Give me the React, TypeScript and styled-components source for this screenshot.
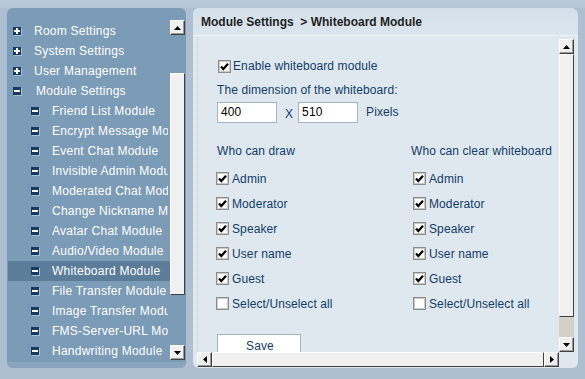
import React from "react";
import styled, { createGlobalStyle, css } from "styled-components";

const GlobalStyle = createGlobalStyle`
  html, body { margin: 0; padding: 0; }
  body {
    width: 585px;
    height: 379px;
    overflow: hidden;
    background: #adbfd1;
    font-family: "Liberation Sans", Arial, sans-serif;
  }
`;

const Page = styled.div`
  width: 585px;
  height: 379px;
  box-sizing: border-box;
  padding: 8px 7px 11px 7px;
  display: flex;
  gap: 7px;
  background: linear-gradient(#b9c9da 0, #b6c7d8 8px, #adbfd1 8px);
`;

/* ---------- Left tree panel ---------- */
const SidePanel = styled.div`
  width: 179px;
  height: 360px;
  border-radius: 6px;
  background: #7b9bb6;
  display: flex;
  flex-direction: column;
  overflow: hidden;
`;

const TreeArea = styled.div`
  display: flex;
  flex: none;
  padding-top: 12px;
  height: 340px;
`;

const TreeList = styled.div`
  width: 163px;
  padding-top: 1px;
  display: flex;
  flex-direction: column;
`;

const TreeRow = styled.div<{ $level: number; $selected?: boolean }>`
  height: 20px;
  flex: none;
  display: flex;
  align-items: center;
  padding-left: ${(p) => (p.$level === 0 ? 6 : 24)}px;
  background: ${(p) => (p.$selected ? "#5c7d9a" : "transparent")};
  ${(p) =>
    p.$selected &&
    css`
      margin-left: 1px;
      padding-left: ${p.$level === 0 ? 5 : 23}px;
    `}
`;

const Expander = styled.span<{ $open: boolean }>`
  position: relative;
  width: 8px;
  height: 8px;
  flex: none;
  background: #173a62;
  box-shadow: 1px 1px 0 #a8bfd4;
  &::before {
    content: "";
    position: absolute;
    left: 1px;
    right: 1px;
    top: 3px;
    height: 2px;
    background: #fff;
  }
  ${(p) =>
    !p.$open &&
    css`
      &::after {
        content: "";
        position: absolute;
        top: 1px;
        bottom: 1px;
        left: 3px;
        width: 2px;
        background: #fff;
      }
    `}
`;

const TreeLabel = styled.span<{ $gap: number }>`
  flex: 1;
  margin-left: ${(p) => p.$gap}px;
  margin-right: 2px;
  overflow: hidden;
  white-space: nowrap;
  color: #ffffff;
  font-size: 12px;
  letter-spacing: 0.25px;
`;

const SideFooter = styled.div`
  flex: 1;
  margin-top: 2px;
  background: #89a6be;
`;

/* ---------- Scrollbars ---------- */
const VScroll = styled.div<{ $top?: number }>`
  width: 15px;
  flex: none;
  display: flex;
  flex-direction: column;
  padding-top: ${(p) => p.$top ?? 0}px;
`;

const HScroll = styled.div`
  height: 15px;
  flex: none;
  display: flex;
`;

const ArrowButton = styled.div`
  width: 15px;
  height: 15px;
  flex: none;
  box-sizing: border-box;
  background: #efefef;
  border-top: 1px solid #ffffff;
  border-left: 1px solid #ffffff;
  border-right: 1px solid #404040;
  border-bottom: 1px solid #404040;
  box-shadow: inset -1px -1px 0 #9a9a9a;
  display: flex;
  align-items: center;
  justify-content: center;
`;

const Thumb = styled.div<{ $len?: number; $horizontal?: boolean }>`
  box-sizing: border-box;
  background: #f0f0f0;
  border-top: 1px solid #ffffff;
  border-left: 1px solid #ffffff;
  border-right: 1px solid #404040;
  border-bottom: 1px solid #404040;
  ${(p) =>
    p.$horizontal
      ? css`
          flex: 1;
          height: 15px;
        `
      : css`
          height: ${p.$len}px;
          flex: none;
        `}
`;

const Track = styled.div<{ $len?: number; $grey?: boolean }>`
  background: ${(p) => (p.$grey ? "#d4d0c8" : "transparent")};
  ${(p) =>
    p.$len !== undefined
      ? css`
          height: ${p.$len}px;
          flex: none;
        `
      : css`
          flex: 1;
        `}
`;

type Dir = "up" | "down" | "left" | "right";
const arrowPoints: Record<Dir, string> = {
  up: "0,4 7,4 3.5,0",
  down: "0,0 7,0 3.5,4",
  left: "4,0 4,7 0,3.5",
  right: "0,0 0,7 4,3.5",
};

function Arrow({ dir }: { dir: Dir }) {
  const horiz = dir === "left" || dir === "right";
  return (
    <ArrowButton>
      <svg width={horiz ? 4 : 7} height={horiz ? 7 : 4} viewBox={horiz ? "0 0 4 7" : "0 0 7 4"}>
        <polygon points={arrowPoints[dir]} fill="#000" />
      </svg>
    </ArrowButton>
  );
}

/* ---------- Right main panel ---------- */
const MainPanel = styled.div`
  width: 385px;
  height: 360px;
  border-radius: 6px 8px 6px 6px;
  background: #dfe7ef;
  display: flex;
  flex-direction: column;
  overflow: hidden;
`;

const Header = styled.div`
  height: 28px;
  flex: none;
  box-sizing: border-box;
  padding-left: 8px;
  display: flex;
  align-items: center;
  background: linear-gradient(#d3dfe9, #dbe5ee);
  border-bottom: 1px solid #eef3f7;
  font-size: 12px;
  font-weight: bold;
  color: #1f1f1f;
  white-space: pre;
`;

const MainBody = styled.div`
  display: flex;
  flex-direction: column;
  padding: 1px 3px 1px 4px;
`;

const ScrollRow = styled.div`
  display: flex;
  flex: none;
  height: 315px;
`;

const Viewport = styled.div`
  width: 362px;
  height: 315px;
  box-sizing: border-box;
  border-left: 1px dotted #c3d0dd;
  overflow: hidden;
  padding: 19px 0 0 19px;
  display: flex;
  flex-direction: column;
  color: #123d68;
  font-size: 12px;
  letter-spacing: 0.1px;
  & > * {
    flex-shrink: 0;
  }
`;

const CheckRow = styled.label`
  height: 20px;
  display: flex;
  align-items: center;
  gap: 2px;
  margin-left: 1px;
  white-space: nowrap;
`;

const Box = styled.span`
  width: 13px;
  height: 13px;
  flex: none;
  box-sizing: border-box;
  background: #ffffff;
  border: 1px solid #8d8d8d;
  box-shadow: inset 0 0 0 1px #c9c9c9;
  display: flex;
  align-items: center;
  justify-content: center;
`;

function Check({ checked }: { checked: boolean }) {
  return (
    <Box>
      {checked && (
        <svg width="9" height="9" viewBox="0 0 9 9">
          <polyline points="1,4.5 3.3,7 8,1.8" fill="none" stroke="#000" strokeWidth="2.2" />
        </svg>
      )}
    </Box>
  );
}

const Caption = styled.div<{ $top?: number }>`
  height: 20px;
  display: flex;
  align-items: center;
  margin-top: ${(p) => p.$top ?? 0}px;
  white-space: nowrap;
`;

const SizeRow = styled.div`
  display: flex;
  align-items: center;
  height: 22px;
  margin-top: 1px;
`;

const NumInput = styled.div`
  width: 60px;
  height: 21px;
  box-sizing: border-box;
  background: #ffffff;
  border: 1px solid #a4b4c4;
  padding-left: 3px;
  display: flex;
  align-items: center;
  color: #000;
  font-size: 12px;
`;

const Times = styled.span`
  margin: 0 5px 0 8px;
  padding-top: 4px;
`;

const Unit = styled.span`
  margin-left: 8px;
`;

const Columns = styled.div`
  display: grid;
  grid-template-columns: 194px auto;
  margin-top: 18px;
`;

const Column = styled.div`
  display: flex;
  flex-direction: column;
`;

const PermRow = styled.label<{ $indent: number }>`
  height: 25px;
  flex: none;
  display: flex;
  align-items: center;
  gap: 3px;
  white-space: nowrap;
  margin-left: ${(p) => p.$indent}px;
`;

const ColumnTitle = styled.div`
  height: 20px;
  flex: none;
  display: flex;
  align-items: center;
  margin-bottom: 5px;
  white-space: nowrap;
`;

const SaveButton = styled.div`
  width: 84px;
  height: 24px;
  box-sizing: border-box;
  margin-top: 18px;
  background: #ffffff;
  border: 1px solid #a4b4c4;
  display: flex;
  align-items: center;
  justify-content: center;
  padding-left: 2px;
  color: #123d68;
`;

const Corner = styled.div`
  width: 16px;
  flex: none;
`;

const treeItems: { label: string; level: number; open?: boolean; selected?: boolean }[] = [
  { label: "Room Settings", level: 0 },
  { label: "System Settings", level: 0 },
  { label: "User Management", level: 0 },
  { label: "Module Settings", level: 0, open: true },
  { label: "Friend List Module", level: 1 },
  { label: "Encrypt Message Module", level: 1 },
  { label: "Event Chat Module", level: 1 },
  { label: "Invisible Admin Module", level: 1 },
  { label: "Moderated Chat Module", level: 1 },
  { label: "Change Nickname Module", level: 1 },
  { label: "Avatar Chat Module", level: 1 },
  { label: "Audio/Video Module", level: 1 },
  { label: "Whiteboard Module", level: 1, selected: true },
  { label: "File Transfer Module", level: 1 },
  { label: "Image Transfer Module", level: 1 },
  { label: "FMS-Server-URL Module", level: 1 },
  { label: "Handwriting Module", level: 1 },
];

const roles = ["Admin", "Moderator", "Speaker", "User name", "Guest"];

function PermColumn({ title, indent }: { title: string; indent: number }) {
  return (
    <Column>
      <ColumnTitle>{title}</ColumnTitle>
      {roles.map((r) => (
        <PermRow key={r} $indent={indent}>
          <Check checked />
          {r}
        </PermRow>
      ))}
      <PermRow $indent={indent}>
        <Check checked={false} />
        Select/Unselect all
      </PermRow>
    </Column>
  );
}

export default function App() {
  return (
    <>
      <GlobalStyle />
      <Page>
        <SidePanel>
          <TreeArea>
            <TreeList>
              {treeItems.map((it) => (
                <TreeRow key={it.label} $level={it.level} $selected={it.selected}>
                  <Expander $open={it.level === 1 || !!it.open} />
                  <TreeLabel $gap={it.open ? 15 : 13}>{it.label}</TreeLabel>
                </TreeRow>
              ))}
            </TreeList>
            <VScroll>
              <Arrow dir="up" />
              <Track $len={38} />
              <Thumb $len={222} />
              <Track />
              <Arrow dir="down" />
            </VScroll>
          </TreeArea>
          <SideFooter />
        </SidePanel>

        <MainPanel>
          <Header>{"Module Settings  > Whiteboard Module"}</Header>
          <MainBody>
            <ScrollRow>
              <Viewport>
                <CheckRow>
                  <Check checked />
                  Enable whiteboard module
                </CheckRow>
                <Caption $top={4}>The dimension of the whiteboard:</Caption>
                <SizeRow>
                  <NumInput>400</NumInput>
                  <Times>X</Times>
                  <NumInput>510</NumInput>
                  <Unit>Pixels</Unit>
                </SizeRow>
                <Columns>
                  <PermColumn title="Who can draw" indent={-1} />
                  <PermColumn title="Who can clear whiteboard" indent={2} />
                </Columns>
                <SaveButton>Save</SaveButton>
              </Viewport>
              <VScroll $top={2}>
                <Arrow dir="up" />
                <Thumb $len={263} />
                <Track $grey />
                <Arrow dir="down" />
              </VScroll>
            </ScrollRow>
            <HScroll>
              <Arrow dir="left" />
              <Thumb $horizontal />
              <Arrow dir="right" />
              <Corner />
            </HScroll>
          </MainBody>
        </MainPanel>
      </Page>
    </>
  );
}
